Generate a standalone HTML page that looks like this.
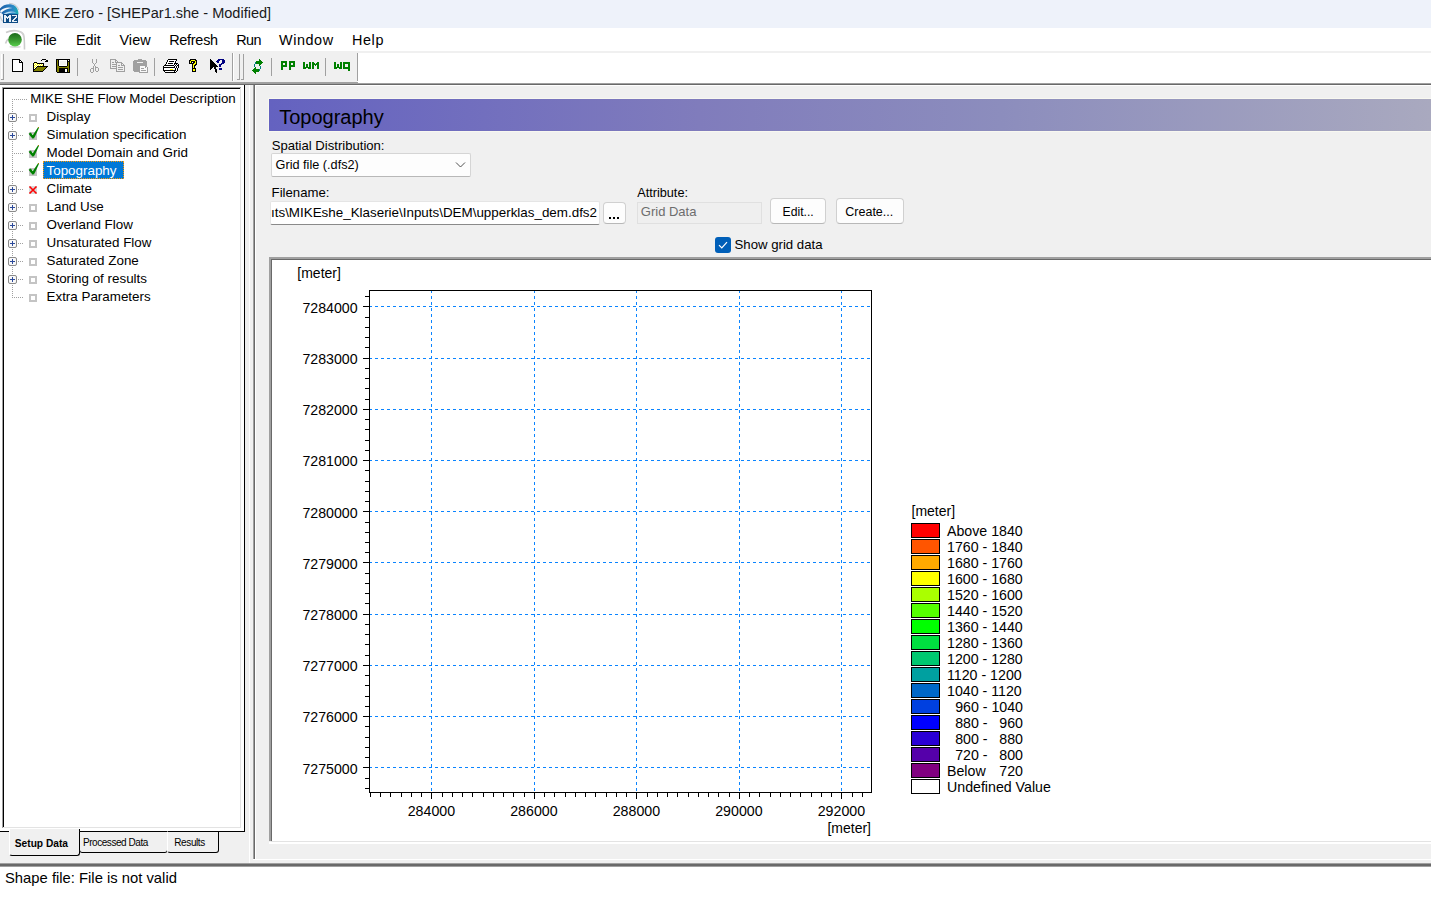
<!DOCTYPE html>
<html><head><meta charset="utf-8"><title>MIKE Zero</title>
<style>
html,body{margin:0;padding:0;}
body{width:1431px;height:910px;position:relative;overflow:hidden;background:#f0f0f0;font-family:"Liberation Sans", sans-serif;}
.b{position:absolute;}
.t{position:absolute;white-space:pre;font-family:"Liberation Sans", sans-serif;}
svg text{font-family:"Liberation Sans", sans-serif;}
</style></head><body>
<div class="b" style="left:0px;top:0px;width:1431px;height:28px;background:#eef2fa;"></div>
<div class="b" style="left:0px;top:28px;width:1431px;height:23px;background:#ffffff;"></div>
<div class="b" style="left:0px;top:51px;width:1431px;height:32px;background:#ffffff;"></div>
<div class="b" style="left:0px;top:51px;width:1431px;height:2px;background:#f0f0f0;"></div>
<div class="b" style="left:0px;top:51px;width:357px;height:31px;background:#f0f0f0;"></div>
<div class="b" style="left:357px;top:53px;width:1px;height:28px;background:#a0a0a0;"></div>
<div class="b" style="left:0px;top:82px;width:358px;height:1px;background:#a0a0a0;"></div>
<div class="b" style="left:0px;top:83px;width:1431px;height:1px;background:#a0a0a0;"></div>
<div class="b" style="left:0px;top:84px;width:1431px;height:1px;background:#696969;"></div>
<div class="b" style="left:0px;top:85px;width:1431px;height:778px;background:#f0f0f0;"></div>
<div class="b" style="left:0px;top:863px;width:1431px;height:1px;background:#a0a0a0;"></div>
<div class="b" style="left:0px;top:864px;width:1431px;height:2px;background:#696969;"></div>
<div class="b" style="left:0px;top:866px;width:1431px;height:1px;background:#a0a0a0;"></div>
<div class="b" style="left:0px;top:867px;width:1431px;height:43px;background:#ffffff;"></div>
<svg class="b" style="left:0;top:2px" width="24" height="24" viewBox="0 0 24 24"><defs><linearGradient id="tg" x1="0" y1="0" x2="1" y2="0"><stop offset="0" stop-color="#1a5ea6"/><stop offset="0.7" stop-color="#2a88c8"/><stop offset="1" stop-color="#18b0b0"/></linearGradient><linearGradient id="tg2" x1="0" y1="0" x2="1" y2="0"><stop offset="0" stop-color="#1a64a8"/><stop offset="0.5" stop-color="#7ab8e0"/><stop offset="1" stop-color="#30b0c0"/></linearGradient></defs><path d="M0 6.5 C3 2.5 10 1 14.5 3.5 C17 5 18.5 8 18.5 12.5 L3 12.5 C2 11.5 1 10.5 0 10.5 Z" fill="url(#tg)"/><path d="M0 9 C3 6 8 4.5 12.5 6 C8 6.3 4 8 1 11 Z" fill="#f4f8fc"/><path d="M3.5 12 C6.5 9.5 11 8.8 16.5 10.5 C12 10.3 8.5 10.8 6 12.5 Z" fill="#b8daf0"/><path d="M9 1.3 C13 1.3 17 3.5 18.8 8" fill="none" stroke="#c8ccd0" stroke-width="1.1"/><path d="M0 14 C0.5 16 1.5 18 3 19.5" fill="none" stroke="#c8ccd0" stroke-width="1.2"/><rect x="3" y="12" width="15" height="9" fill="#0e4c86"/><rect x="4" y="13" width="1" height="1" fill="#e6eef6"/><rect x="5" y="13" width="1" height="1" fill="#e6eef6"/><rect x="9" y="13" width="1" height="1" fill="#e6eef6"/><rect x="10" y="13" width="1" height="1" fill="#e6eef6"/><rect x="4" y="14" width="1" height="1" fill="#e6eef6"/><rect x="5" y="14" width="1" height="1" fill="#e6eef6"/><rect x="6" y="14" width="1" height="1" fill="#e6eef6"/><rect x="8" y="14" width="1" height="1" fill="#e6eef6"/><rect x="9" y="14" width="1" height="1" fill="#e6eef6"/><rect x="10" y="14" width="1" height="1" fill="#e6eef6"/><rect x="4" y="15" width="1" height="1" fill="#e6eef6"/><rect x="5" y="15" width="1" height="1" fill="#e6eef6"/><rect x="6" y="15" width="1" height="1" fill="#e6eef6"/><rect x="7" y="15" width="1" height="1" fill="#e6eef6"/><rect x="8" y="15" width="1" height="1" fill="#e6eef6"/><rect x="9" y="15" width="1" height="1" fill="#e6eef6"/><rect x="10" y="15" width="1" height="1" fill="#e6eef6"/><rect x="4" y="16" width="1" height="1" fill="#e6eef6"/><rect x="5" y="16" width="1" height="1" fill="#e6eef6"/><rect x="7" y="16" width="1" height="1" fill="#e6eef6"/><rect x="9" y="16" width="1" height="1" fill="#e6eef6"/><rect x="10" y="16" width="1" height="1" fill="#e6eef6"/><rect x="4" y="17" width="1" height="1" fill="#e6eef6"/><rect x="5" y="17" width="1" height="1" fill="#e6eef6"/><rect x="9" y="17" width="1" height="1" fill="#e6eef6"/><rect x="10" y="17" width="1" height="1" fill="#e6eef6"/><rect x="4" y="18" width="1" height="1" fill="#e6eef6"/><rect x="5" y="18" width="1" height="1" fill="#e6eef6"/><rect x="9" y="18" width="1" height="1" fill="#e6eef6"/><rect x="10" y="18" width="1" height="1" fill="#e6eef6"/><rect x="4" y="19" width="1" height="1" fill="#e6eef6"/><rect x="5" y="19" width="1" height="1" fill="#e6eef6"/><rect x="9" y="19" width="1" height="1" fill="#e6eef6"/><rect x="10" y="19" width="1" height="1" fill="#e6eef6"/><rect x="12" y="13" width="1" height="1" fill="#e6eef6"/><rect x="13" y="13" width="1" height="1" fill="#e6eef6"/><rect x="14" y="13" width="1" height="1" fill="#e6eef6"/><rect x="15" y="13" width="1" height="1" fill="#e6eef6"/><rect x="16" y="13" width="1" height="1" fill="#e6eef6"/><rect x="16" y="14" width="1" height="1" fill="#e6eef6"/><rect x="15" y="15" width="1" height="1" fill="#e6eef6"/><rect x="16" y="15" width="1" height="1" fill="#e6eef6"/><rect x="14" y="16" width="1" height="1" fill="#e6eef6"/><rect x="15" y="16" width="1" height="1" fill="#e6eef6"/><rect x="13" y="17" width="1" height="1" fill="#e6eef6"/><rect x="14" y="17" width="1" height="1" fill="#e6eef6"/><rect x="12" y="18" width="1" height="1" fill="#e6eef6"/><rect x="13" y="18" width="1" height="1" fill="#e6eef6"/><rect x="12" y="19" width="1" height="1" fill="#e6eef6"/><rect x="13" y="19" width="1" height="1" fill="#e6eef6"/><rect x="14" y="19" width="1" height="1" fill="#e6eef6"/><rect x="15" y="19" width="1" height="1" fill="#e6eef6"/><rect x="16" y="19" width="1" height="1" fill="#e6eef6"/></svg>
<div class="t " style="left:24.6px;top:6.28px;font-size:14.55px;line-height:14.55px;color:#1a1a1a">MIKE Zero - [SHEPar1.she - Modified]</div>
<svg class="b" style="left:2px;top:28px" width="24" height="24" viewBox="0 0 24 24">
<defs><linearGradient id="gb" x1="0" y1="0" x2="0" y2="1"><stop offset="0" stop-color="#1a6a1a"/><stop offset="0.55" stop-color="#3a9a30"/><stop offset="1" stop-color="#5ad04e"/></linearGradient></defs>
<path d="M4 4.5 C10 1.5 19 2 21.5 6.5 C22.5 9 22.5 12 22.5 21.5" fill="none" stroke="#cccccc" stroke-width="1.6"/>
<path d="M17 3.5 C20 4.5 21.5 6 21.5 9" fill="none" stroke="#d4d4d4" stroke-width="1.2"/>
<path d="M3.5 15.5 C4 13.5 5 12 6.5 11" fill="none" stroke="#cccccc" stroke-width="1.6"/>
<ellipse cx="13.2" cy="18.8" rx="6" ry="1.2" fill="#dcdcdc"/>
<circle cx="13" cy="11.8" r="6.8" fill="url(#gb)"/>
</svg>
<div class="t " style="left:34.5px;top:33.41px;font-size:14.4px;line-height:14.4px;color:#000;letter-spacing:-0.3px">File</div>
<div class="t " style="left:76px;top:33.41px;font-size:14.4px;line-height:14.4px;color:#000;letter-spacing:0px">Edit</div>
<div class="t " style="left:119.4px;top:33.41px;font-size:14.4px;line-height:14.4px;color:#000;letter-spacing:0.1px">View</div>
<div class="t " style="left:169.2px;top:33.41px;font-size:14.4px;line-height:14.4px;color:#000;letter-spacing:-0.25px">Refresh</div>
<div class="t " style="left:236.3px;top:33.41px;font-size:14.4px;line-height:14.4px;color:#000;letter-spacing:-0.6px">Run</div>
<div class="t " style="left:279.1px;top:33.41px;font-size:14.4px;line-height:14.4px;color:#000;letter-spacing:0.55px">Window</div>
<div class="t " style="left:352px;top:33.41px;font-size:14.4px;line-height:14.4px;color:#000;letter-spacing:0.6px">Help</div>
<div class="b" style="left:1px;top:54px;width:1px;height:26px;background:#ffffff;"></div>
<div class="b" style="left:3px;top:54px;width:1px;height:26px;background:#a0a0a0;"></div>
<div class="b" style="left:1px;top:79px;width:3px;height:1px;background:#a0a0a0;"></div>
<div class="b" style="left:77px;top:58px;width:1px;height:18px;background:#a0a0a0;"></div>
<div class="b" style="left:154px;top:58px;width:1px;height:18px;background:#a0a0a0;"></div>
<div class="b" style="left:232px;top:53px;width:1px;height:28px;background:#a0a0a0;"></div>
<div class="b" style="left:233px;top:53px;width:1px;height:28px;background:#ffffff;"></div>
<div class="b" style="left:239px;top:54px;width:1px;height:26px;background:#a0a0a0;"></div>
<div class="b" style="left:237px;top:79px;width:3px;height:1px;background:#a0a0a0;"></div>
<div class="b" style="left:243px;top:54px;width:1px;height:26px;background:#a0a0a0;"></div>
<div class="b" style="left:241px;top:79px;width:3px;height:1px;background:#a0a0a0;"></div>
<div class="b" style="left:271px;top:58px;width:1px;height:18px;background:#a0a0a0;"></div>
<div class="b" style="left:325px;top:58px;width:1px;height:18px;background:#a0a0a0;"></div>

<svg class="b" style="left:0;top:52px" width="360" height="30" viewBox="0 52 360 30" shape-rendering="crispEdges">
<rect x="12" y="59" width="8" height="1" fill="#000000"/><rect x="12" y="60" width="1" height="1" fill="#000000"/><rect x="13" y="60" width="6" height="1" fill="#ffffff"/><rect x="19" y="60" width="2" height="1" fill="#000000"/><rect x="12" y="61" width="1" height="1" fill="#000000"/><rect x="13" y="61" width="6" height="1" fill="#ffffff"/><rect x="19" y="61" width="1" height="1" fill="#000000"/><rect x="20" y="61" width="1" height="1" fill="#ffffff"/><rect x="21" y="61" width="1" height="1" fill="#000000"/><rect x="12" y="62" width="1" height="1" fill="#000000"/><rect x="13" y="62" width="6" height="1" fill="#ffffff"/><rect x="19" y="62" width="4" height="1" fill="#000000"/><rect x="12" y="63" width="1" height="1" fill="#000000"/><rect x="13" y="63" width="9" height="1" fill="#ffffff"/><rect x="22" y="63" width="1" height="1" fill="#000000"/><rect x="12" y="64" width="1" height="1" fill="#000000"/><rect x="13" y="64" width="9" height="1" fill="#ffffff"/><rect x="22" y="64" width="1" height="1" fill="#000000"/><rect x="12" y="65" width="1" height="1" fill="#000000"/><rect x="13" y="65" width="9" height="1" fill="#ffffff"/><rect x="22" y="65" width="1" height="1" fill="#000000"/><rect x="12" y="66" width="1" height="1" fill="#000000"/><rect x="13" y="66" width="9" height="1" fill="#ffffff"/><rect x="22" y="66" width="1" height="1" fill="#000000"/><rect x="12" y="67" width="1" height="1" fill="#000000"/><rect x="13" y="67" width="9" height="1" fill="#ffffff"/><rect x="22" y="67" width="1" height="1" fill="#000000"/><rect x="12" y="68" width="1" height="1" fill="#000000"/><rect x="13" y="68" width="9" height="1" fill="#ffffff"/><rect x="22" y="68" width="1" height="1" fill="#000000"/><rect x="12" y="69" width="1" height="1" fill="#000000"/><rect x="13" y="69" width="9" height="1" fill="#ffffff"/><rect x="22" y="69" width="1" height="1" fill="#000000"/><rect x="12" y="70" width="1" height="1" fill="#000000"/><rect x="13" y="70" width="9" height="1" fill="#ffffff"/><rect x="22" y="70" width="1" height="1" fill="#000000"/><rect x="12" y="71" width="11" height="1" fill="#000000"/><rect x="42" y="59" width="4" height="1" fill="#000000"/><rect x="41" y="60" width="1" height="1" fill="#000000"/><rect x="46" y="60" width="2" height="1" fill="#000000"/><rect x="45" y="61" width="3" height="1" fill="#000000"/><rect x="34" y="62" width="3" height="1" fill="#000000"/><rect x="33" y="63" width="1" height="1" fill="#000000"/><rect x="34" y="63" width="1" height="1" fill="#ffff00"/><rect x="35" y="63" width="1" height="1" fill="#ffffff"/><rect x="36" y="63" width="1" height="1" fill="#ffff00"/><rect x="37" y="63" width="7" height="1" fill="#000000"/><rect x="33" y="64" width="1" height="1" fill="#000000"/><rect x="34" y="64" width="1" height="1" fill="#ffffff"/><rect x="35" y="64" width="1" height="1" fill="#ffff00"/><rect x="36" y="64" width="1" height="1" fill="#ffffff"/><rect x="37" y="64" width="1" height="1" fill="#ffff00"/><rect x="38" y="64" width="1" height="1" fill="#ffffff"/><rect x="39" y="64" width="1" height="1" fill="#ffff00"/><rect x="40" y="64" width="1" height="1" fill="#ffffff"/><rect x="41" y="64" width="1" height="1" fill="#ffff00"/><rect x="42" y="64" width="1" height="1" fill="#ffffff"/><rect x="43" y="64" width="1" height="1" fill="#000000"/><rect x="33" y="65" width="1" height="1" fill="#000000"/><rect x="34" y="65" width="1" height="1" fill="#ffff00"/><rect x="35" y="65" width="1" height="1" fill="#ffffff"/><rect x="36" y="65" width="1" height="1" fill="#ffff00"/><rect x="37" y="65" width="1" height="1" fill="#ffffff"/><rect x="38" y="65" width="1" height="1" fill="#ffff00"/><rect x="39" y="65" width="1" height="1" fill="#ffffff"/><rect x="40" y="65" width="1" height="1" fill="#ffff00"/><rect x="41" y="65" width="1" height="1" fill="#ffffff"/><rect x="42" y="65" width="1" height="1" fill="#ffff00"/><rect x="43" y="65" width="1" height="1" fill="#000000"/><rect x="33" y="66" width="1" height="1" fill="#000000"/><rect x="34" y="66" width="1" height="1" fill="#ffffff"/><rect x="35" y="66" width="1" height="1" fill="#ffff00"/><rect x="36" y="66" width="1" height="1" fill="#ffffff"/><rect x="37" y="66" width="11" height="1" fill="#000000"/><rect x="33" y="67" width="1" height="1" fill="#000000"/><rect x="34" y="67" width="1" height="1" fill="#ffff00"/><rect x="35" y="67" width="1" height="1" fill="#ffffff"/><rect x="36" y="67" width="1" height="1" fill="#000000"/><rect x="37" y="67" width="9" height="1" fill="#808000"/><rect x="46" y="67" width="1" height="1" fill="#000000"/><rect x="33" y="68" width="1" height="1" fill="#000000"/><rect x="34" y="68" width="1" height="1" fill="#ffffff"/><rect x="35" y="68" width="1" height="1" fill="#000000"/><rect x="36" y="68" width="9" height="1" fill="#808000"/><rect x="45" y="68" width="1" height="1" fill="#000000"/><rect x="33" y="69" width="2" height="1" fill="#000000"/><rect x="35" y="69" width="9" height="1" fill="#808000"/><rect x="44" y="69" width="1" height="1" fill="#000000"/><rect x="33" y="70" width="1" height="1" fill="#000000"/><rect x="34" y="70" width="9" height="1" fill="#808000"/><rect x="43" y="70" width="1" height="1" fill="#000000"/><rect x="33" y="71" width="10" height="1" fill="#000000"/><rect x="56" y="59" width="14" height="1" fill="#000000"/><rect x="56" y="60" width="1" height="1" fill="#000000"/><rect x="57" y="60" width="1" height="1" fill="#808000"/><rect x="58" y="60" width="1" height="1" fill="#000000"/><rect x="59" y="60" width="8" height="1" fill="#ffffff"/><rect x="67" y="60" width="1" height="1" fill="#000000"/><rect x="68" y="60" width="1" height="1" fill="#ffffff"/><rect x="69" y="60" width="1" height="1" fill="#000000"/><rect x="56" y="61" width="1" height="1" fill="#000000"/><rect x="57" y="61" width="1" height="1" fill="#808000"/><rect x="58" y="61" width="1" height="1" fill="#000000"/><rect x="59" y="61" width="1" height="1" fill="#ffffff"/><rect x="60" y="61" width="6" height="1" fill="#f0f0f0"/><rect x="66" y="61" width="1" height="1" fill="#ffffff"/><rect x="67" y="61" width="3" height="1" fill="#000000"/><rect x="56" y="62" width="1" height="1" fill="#000000"/><rect x="57" y="62" width="1" height="1" fill="#808000"/><rect x="58" y="62" width="1" height="1" fill="#000000"/><rect x="59" y="62" width="1" height="1" fill="#ffffff"/><rect x="60" y="62" width="6" height="1" fill="#f0f0f0"/><rect x="66" y="62" width="1" height="1" fill="#ffffff"/><rect x="67" y="62" width="1" height="1" fill="#000000"/><rect x="68" y="62" width="1" height="1" fill="#808000"/><rect x="69" y="62" width="1" height="1" fill="#000000"/><rect x="56" y="63" width="1" height="1" fill="#000000"/><rect x="57" y="63" width="1" height="1" fill="#808000"/><rect x="58" y="63" width="1" height="1" fill="#000000"/><rect x="59" y="63" width="1" height="1" fill="#ffffff"/><rect x="60" y="63" width="6" height="1" fill="#f0f0f0"/><rect x="66" y="63" width="1" height="1" fill="#ffffff"/><rect x="67" y="63" width="1" height="1" fill="#000000"/><rect x="68" y="63" width="1" height="1" fill="#808000"/><rect x="69" y="63" width="1" height="1" fill="#000000"/><rect x="56" y="64" width="1" height="1" fill="#000000"/><rect x="57" y="64" width="1" height="1" fill="#808000"/><rect x="58" y="64" width="1" height="1" fill="#000000"/><rect x="59" y="64" width="1" height="1" fill="#ffffff"/><rect x="60" y="64" width="6" height="1" fill="#f0f0f0"/><rect x="66" y="64" width="1" height="1" fill="#ffffff"/><rect x="67" y="64" width="1" height="1" fill="#000000"/><rect x="68" y="64" width="1" height="1" fill="#808000"/><rect x="69" y="64" width="1" height="1" fill="#000000"/><rect x="56" y="65" width="1" height="1" fill="#000000"/><rect x="57" y="65" width="1" height="1" fill="#808000"/><rect x="58" y="65" width="1" height="1" fill="#000000"/><rect x="59" y="65" width="8" height="1" fill="#ffffff"/><rect x="67" y="65" width="1" height="1" fill="#000000"/><rect x="68" y="65" width="1" height="1" fill="#808000"/><rect x="69" y="65" width="1" height="1" fill="#000000"/><rect x="56" y="66" width="1" height="1" fill="#000000"/><rect x="57" y="66" width="2" height="1" fill="#808000"/><rect x="59" y="66" width="8" height="1" fill="#000000"/><rect x="67" y="66" width="2" height="1" fill="#808000"/><rect x="69" y="66" width="1" height="1" fill="#000000"/><rect x="56" y="67" width="1" height="1" fill="#000000"/><rect x="57" y="67" width="12" height="1" fill="#808000"/><rect x="69" y="67" width="1" height="1" fill="#000000"/><rect x="56" y="68" width="1" height="1" fill="#000000"/><rect x="57" y="68" width="2" height="1" fill="#808000"/><rect x="59" y="68" width="9" height="1" fill="#000000"/><rect x="68" y="68" width="1" height="1" fill="#808000"/><rect x="69" y="68" width="1" height="1" fill="#000000"/><rect x="56" y="69" width="1" height="1" fill="#000000"/><rect x="57" y="69" width="2" height="1" fill="#808000"/><rect x="59" y="69" width="6" height="1" fill="#000000"/><rect x="65" y="69" width="2" height="1" fill="#ffffff"/><rect x="67" y="69" width="1" height="1" fill="#000000"/><rect x="68" y="69" width="1" height="1" fill="#808000"/><rect x="69" y="69" width="1" height="1" fill="#000000"/><rect x="56" y="70" width="1" height="1" fill="#000000"/><rect x="57" y="70" width="2" height="1" fill="#808000"/><rect x="59" y="70" width="6" height="1" fill="#000000"/><rect x="65" y="70" width="2" height="1" fill="#ffffff"/><rect x="67" y="70" width="1" height="1" fill="#000000"/><rect x="68" y="70" width="1" height="1" fill="#808000"/><rect x="69" y="70" width="1" height="1" fill="#000000"/><rect x="56" y="71" width="1" height="1" fill="#000000"/><rect x="57" y="71" width="2" height="1" fill="#808000"/><rect x="59" y="71" width="6" height="1" fill="#000000"/><rect x="65" y="71" width="2" height="1" fill="#ffffff"/><rect x="67" y="71" width="1" height="1" fill="#000000"/><rect x="68" y="71" width="1" height="1" fill="#808000"/><rect x="69" y="71" width="1" height="1" fill="#000000"/><rect x="57" y="72" width="13" height="1" fill="#000000"/><rect x="92" y="59" width="1" height="1" fill="#a0a0a0"/><rect x="96" y="59" width="1" height="1" fill="#a0a0a0"/><rect x="92" y="60" width="1" height="1" fill="#a0a0a0"/><rect x="96" y="60" width="1" height="1" fill="#a0a0a0"/><rect x="92" y="61" width="1" height="1" fill="#a0a0a0"/><rect x="96" y="61" width="1" height="1" fill="#a0a0a0"/><rect x="92" y="62" width="1" height="1" fill="#a0a0a0"/><rect x="96" y="62" width="1" height="1" fill="#a0a0a0"/><rect x="93" y="63" width="1" height="1" fill="#a0a0a0"/><rect x="95" y="63" width="1" height="1" fill="#a0a0a0"/><rect x="94" y="64" width="1" height="1" fill="#a0a0a0"/><rect x="94" y="65" width="1" height="1" fill="#a0a0a0"/><rect x="93" y="66" width="1" height="1" fill="#a0a0a0"/><rect x="95" y="66" width="1" height="1" fill="#a0a0a0"/><rect x="93" y="67" width="1" height="1" fill="#a0a0a0"/><rect x="95" y="67" width="3" height="1" fill="#a0a0a0"/><rect x="91" y="68" width="3" height="1" fill="#a0a0a0"/><rect x="95" y="68" width="1" height="1" fill="#a0a0a0"/><rect x="98" y="68" width="1" height="1" fill="#a0a0a0"/><rect x="90" y="69" width="1" height="1" fill="#a0a0a0"/><rect x="93" y="69" width="1" height="1" fill="#a0a0a0"/><rect x="95" y="69" width="1" height="1" fill="#a0a0a0"/><rect x="98" y="69" width="1" height="1" fill="#a0a0a0"/><rect x="90" y="70" width="1" height="1" fill="#a0a0a0"/><rect x="93" y="70" width="1" height="1" fill="#a0a0a0"/><rect x="95" y="70" width="1" height="1" fill="#a0a0a0"/><rect x="98" y="70" width="1" height="1" fill="#a0a0a0"/><rect x="90" y="71" width="1" height="1" fill="#a0a0a0"/><rect x="93" y="71" width="1" height="1" fill="#a0a0a0"/><rect x="96" y="71" width="2" height="1" fill="#a0a0a0"/><rect x="91" y="72" width="2" height="1" fill="#a0a0a0"/><rect x="110" y="59" width="6" height="1" fill="#a0a0a0"/><rect x="110" y="60" width="1" height="1" fill="#a0a0a0"/><rect x="115" y="60" width="2" height="1" fill="#a0a0a0"/><rect x="110" y="61" width="1" height="1" fill="#a0a0a0"/><rect x="115" y="61" width="1" height="1" fill="#a0a0a0"/><rect x="117" y="61" width="1" height="1" fill="#a0a0a0"/><rect x="110" y="62" width="1" height="1" fill="#a0a0a0"/><rect x="112" y="62" width="2" height="1" fill="#a0a0a0"/><rect x="115" y="62" width="7" height="1" fill="#a0a0a0"/><rect x="110" y="63" width="1" height="1" fill="#a0a0a0"/><rect x="116" y="63" width="1" height="1" fill="#a0a0a0"/><rect x="121" y="63" width="2" height="1" fill="#a0a0a0"/><rect x="110" y="64" width="1" height="1" fill="#a0a0a0"/><rect x="112" y="64" width="5" height="1" fill="#a0a0a0"/><rect x="121" y="64" width="1" height="1" fill="#a0a0a0"/><rect x="123" y="64" width="1" height="1" fill="#a0a0a0"/><rect x="110" y="65" width="1" height="1" fill="#a0a0a0"/><rect x="116" y="65" width="1" height="1" fill="#a0a0a0"/><rect x="118" y="65" width="2" height="1" fill="#a0a0a0"/><rect x="121" y="65" width="4" height="1" fill="#a0a0a0"/><rect x="110" y="66" width="1" height="1" fill="#a0a0a0"/><rect x="112" y="66" width="5" height="1" fill="#a0a0a0"/><rect x="124" y="66" width="1" height="1" fill="#a0a0a0"/><rect x="110" y="67" width="1" height="1" fill="#a0a0a0"/><rect x="116" y="67" width="1" height="1" fill="#a0a0a0"/><rect x="118" y="67" width="5" height="1" fill="#a0a0a0"/><rect x="124" y="67" width="1" height="1" fill="#a0a0a0"/><rect x="110" y="68" width="7" height="1" fill="#a0a0a0"/><rect x="124" y="68" width="1" height="1" fill="#a0a0a0"/><rect x="116" y="69" width="1" height="1" fill="#a0a0a0"/><rect x="118" y="69" width="5" height="1" fill="#a0a0a0"/><rect x="124" y="69" width="1" height="1" fill="#a0a0a0"/><rect x="116" y="70" width="1" height="1" fill="#a0a0a0"/><rect x="124" y="70" width="1" height="1" fill="#a0a0a0"/><rect x="116" y="71" width="9" height="1" fill="#a0a0a0"/><rect x="138" y="59" width="4" height="1" fill="#a0a0a0"/><rect x="134" y="60" width="12" height="1" fill="#a0a0a0"/><rect x="133" y="61" width="14" height="1" fill="#a0a0a0"/><rect x="133" y="62" width="4" height="1" fill="#a0a0a0"/><rect x="137" y="62" width="6" height="1" fill="#f0f0f0"/><rect x="143" y="62" width="4" height="1" fill="#a0a0a0"/><rect x="133" y="63" width="14" height="1" fill="#a0a0a0"/><rect x="133" y="64" width="14" height="1" fill="#a0a0a0"/><rect x="133" y="65" width="14" height="1" fill="#a0a0a0"/><rect x="133" y="66" width="7" height="1" fill="#a0a0a0"/><rect x="140" y="66" width="5" height="1" fill="#f8f8f8"/><rect x="145" y="66" width="2" height="1" fill="#a0a0a0"/><rect x="133" y="67" width="7" height="1" fill="#a0a0a0"/><rect x="140" y="67" width="5" height="1" fill="#f8f8f8"/><rect x="145" y="67" width="1" height="1" fill="#a0a0a0"/><rect x="146" y="67" width="1" height="1" fill="#f8f8f8"/><rect x="147" y="67" width="1" height="1" fill="#a0a0a0"/><rect x="133" y="68" width="7" height="1" fill="#a0a0a0"/><rect x="140" y="68" width="1" height="1" fill="#f8f8f8"/><rect x="141" y="68" width="3" height="1" fill="#a0a0a0"/><rect x="144" y="68" width="3" height="1" fill="#f8f8f8"/><rect x="147" y="68" width="1" height="1" fill="#a0a0a0"/><rect x="133" y="69" width="7" height="1" fill="#a0a0a0"/><rect x="140" y="69" width="7" height="1" fill="#f8f8f8"/><rect x="147" y="69" width="1" height="1" fill="#a0a0a0"/><rect x="133" y="70" width="7" height="1" fill="#a0a0a0"/><rect x="140" y="70" width="1" height="1" fill="#f8f8f8"/><rect x="141" y="70" width="5" height="1" fill="#a0a0a0"/><rect x="146" y="70" width="1" height="1" fill="#f8f8f8"/><rect x="147" y="70" width="1" height="1" fill="#a0a0a0"/><rect x="134" y="71" width="6" height="1" fill="#a0a0a0"/><rect x="140" y="71" width="7" height="1" fill="#f8f8f8"/><rect x="147" y="71" width="1" height="1" fill="#a0a0a0"/><rect x="139" y="72" width="9" height="1" fill="#a0a0a0"/><rect x="168" y="59" width="9" height="1" fill="#000000"/><rect x="167" y="60" width="1" height="1" fill="#000000"/><rect x="168" y="60" width="8" height="1" fill="#ffffff"/><rect x="176" y="60" width="1" height="1" fill="#000000"/><rect x="167" y="61" width="1" height="1" fill="#000000"/><rect x="168" y="61" width="1" height="1" fill="#ffffff"/><rect x="169" y="61" width="5" height="1" fill="#000000"/><rect x="174" y="61" width="1" height="1" fill="#ffffff"/><rect x="175" y="61" width="1" height="1" fill="#000000"/><rect x="166" y="62" width="1" height="1" fill="#000000"/><rect x="167" y="62" width="8" height="1" fill="#ffffff"/><rect x="175" y="62" width="1" height="1" fill="#000000"/><rect x="166" y="63" width="1" height="1" fill="#000000"/><rect x="167" y="63" width="1" height="1" fill="#ffffff"/><rect x="168" y="63" width="5" height="1" fill="#000000"/><rect x="173" y="63" width="1" height="1" fill="#ffffff"/><rect x="174" y="63" width="4" height="1" fill="#000000"/><rect x="165" y="64" width="1" height="1" fill="#000000"/><rect x="166" y="64" width="8" height="1" fill="#ffffff"/><rect x="174" y="64" width="1" height="1" fill="#000000"/><rect x="175" y="64" width="1" height="1" fill="#ffffff"/><rect x="176" y="64" width="1" height="1" fill="#000000"/><rect x="177" y="64" width="1" height="1" fill="#ffffff"/><rect x="178" y="64" width="1" height="1" fill="#000000"/><rect x="164" y="65" width="10" height="1" fill="#000000"/><rect x="174" y="65" width="1" height="1" fill="#ffffff"/><rect x="175" y="65" width="1" height="1" fill="#000000"/><rect x="176" y="65" width="1" height="1" fill="#ffffff"/><rect x="177" y="65" width="2" height="1" fill="#000000"/><rect x="163" y="66" width="1" height="1" fill="#000000"/><rect x="164" y="66" width="10" height="1" fill="#ffffff"/><rect x="174" y="66" width="1" height="1" fill="#000000"/><rect x="175" y="66" width="1" height="1" fill="#ffffff"/><rect x="176" y="66" width="1" height="1" fill="#000000"/><rect x="177" y="66" width="1" height="1" fill="#ffffff"/><rect x="178" y="66" width="1" height="1" fill="#000000"/><rect x="163" y="67" width="12" height="1" fill="#000000"/><rect x="175" y="67" width="1" height="1" fill="#ffffff"/><rect x="176" y="67" width="1" height="1" fill="#000000"/><rect x="177" y="67" width="1" height="1" fill="#ffffff"/><rect x="178" y="67" width="1" height="1" fill="#000000"/><rect x="163" y="68" width="1" height="1" fill="#000000"/><rect x="164" y="68" width="11" height="1" fill="#ffffff"/><rect x="175" y="68" width="1" height="1" fill="#000000"/><rect x="176" y="68" width="1" height="1" fill="#ffffff"/><rect x="177" y="68" width="1" height="1" fill="#000000"/><rect x="163" y="69" width="1" height="1" fill="#000000"/><rect x="164" y="69" width="6" height="1" fill="#ffffff"/><rect x="170" y="69" width="3" height="1" fill="#ffff00"/><rect x="173" y="69" width="2" height="1" fill="#ffffff"/><rect x="175" y="69" width="1" height="1" fill="#000000"/><rect x="176" y="69" width="1" height="1" fill="#ffffff"/><rect x="177" y="69" width="1" height="1" fill="#000000"/><rect x="163" y="70" width="13" height="1" fill="#000000"/><rect x="176" y="70" width="1" height="1" fill="#ffffff"/><rect x="177" y="70" width="1" height="1" fill="#000000"/><rect x="164" y="71" width="1" height="1" fill="#000000"/><rect x="165" y="71" width="9" height="1" fill="#ffffff"/><rect x="174" y="71" width="1" height="1" fill="#000000"/><rect x="175" y="71" width="1" height="1" fill="#ffffff"/><rect x="176" y="71" width="1" height="1" fill="#000000"/><rect x="165" y="72" width="11" height="1" fill="#000000"/><rect x="190" y="59" width="6" height="1" fill="#000000"/><rect x="189" y="60" width="2" height="1" fill="#000000"/><rect x="191" y="60" width="4" height="1" fill="#ffff00"/><rect x="195" y="60" width="2" height="1" fill="#000000"/><rect x="189" y="61" width="1" height="1" fill="#000000"/><rect x="190" y="61" width="1" height="1" fill="#ffff00"/><rect x="191" y="61" width="4" height="1" fill="#000000"/><rect x="195" y="61" width="1" height="1" fill="#ffff00"/><rect x="196" y="61" width="1" height="1" fill="#000000"/><rect x="189" y="62" width="1" height="1" fill="#000000"/><rect x="190" y="62" width="1" height="1" fill="#ffff00"/><rect x="191" y="62" width="1" height="1" fill="#000000"/><rect x="193" y="62" width="2" height="1" fill="#000000"/><rect x="195" y="62" width="1" height="1" fill="#ffff00"/><rect x="196" y="62" width="1" height="1" fill="#000000"/><rect x="189" y="63" width="5" height="1" fill="#000000"/><rect x="194" y="63" width="2" height="1" fill="#ffff00"/><rect x="196" y="63" width="1" height="1" fill="#000000"/><rect x="192" y="64" width="1" height="1" fill="#000000"/><rect x="193" y="64" width="2" height="1" fill="#ffff00"/><rect x="195" y="64" width="2" height="1" fill="#000000"/><rect x="192" y="65" width="1" height="1" fill="#000000"/><rect x="193" y="65" width="1" height="1" fill="#ffff00"/><rect x="194" y="65" width="2" height="1" fill="#000000"/><rect x="192" y="66" width="1" height="1" fill="#000000"/><rect x="193" y="66" width="1" height="1" fill="#ffff00"/><rect x="194" y="66" width="1" height="1" fill="#000000"/><rect x="192" y="67" width="1" height="1" fill="#000000"/><rect x="193" y="67" width="1" height="1" fill="#ffff00"/><rect x="194" y="67" width="1" height="1" fill="#000000"/><rect x="192" y="68" width="4" height="1" fill="#000000"/><rect x="192" y="69" width="1" height="1" fill="#000000"/><rect x="193" y="69" width="2" height="1" fill="#ffff00"/><rect x="195" y="69" width="1" height="1" fill="#000000"/><rect x="192" y="70" width="1" height="1" fill="#000000"/><rect x="193" y="70" width="2" height="1" fill="#ffff00"/><rect x="195" y="70" width="1" height="1" fill="#000000"/><rect x="192" y="71" width="4" height="1" fill="#000000"/><rect x="210" y="59" width="1" height="1" fill="#000000"/><rect x="210" y="60" width="2" height="1" fill="#000000"/><rect x="210" y="61" width="3" height="1" fill="#000000"/><rect x="210" y="62" width="4" height="1" fill="#000000"/><rect x="210" y="63" width="5" height="1" fill="#000000"/><rect x="210" y="64" width="6" height="1" fill="#000000"/><rect x="210" y="65" width="7" height="1" fill="#000000"/><rect x="210" y="66" width="8" height="1" fill="#000000"/><rect x="210" y="67" width="3" height="1" fill="#000000"/><rect x="214" y="67" width="2" height="1" fill="#000000"/><rect x="210" y="68" width="2" height="1" fill="#000000"/><rect x="214" y="68" width="2" height="1" fill="#000000"/><rect x="210" y="69" width="1" height="1" fill="#000000"/><rect x="215" y="69" width="2" height="1" fill="#000000"/><rect x="215" y="70" width="2" height="1" fill="#000000"/><rect x="215" y="71" width="2" height="1" fill="#000000"/><rect x="216" y="72" width="1" height="1" fill="#000000"/><rect x="218" y="59" width="6" height="1" fill="#000080"/><rect x="217" y="60" width="3" height="1" fill="#000080"/><rect x="222" y="60" width="3" height="1" fill="#000080"/><rect x="216" y="61" width="3" height="1" fill="#000080"/><rect x="222" y="61" width="3" height="1" fill="#000080"/><rect x="217" y="62" width="2" height="1" fill="#000080"/><rect x="222" y="62" width="3" height="1" fill="#000080"/><rect x="221" y="63" width="3" height="1" fill="#000080"/><rect x="219" y="64" width="3" height="1" fill="#000080"/><rect x="219" y="65" width="2" height="1" fill="#000080"/><rect x="219" y="66" width="2" height="1" fill="#000080"/><rect x="219" y="68" width="3" height="1" fill="#000080"/><rect x="219" y="69" width="3" height="1" fill="#000080"/>
<!-- refresh -->
<rect x="259" y="59" width="1" height="1" fill="#008000"/><rect x="259" y="60" width="2" height="1" fill="#008000"/><rect x="256" y="61" width="6" height="1" fill="#008000"/><rect x="256" y="62" width="7" height="1" fill="#008000"/><rect x="256" y="63" width="6" height="1" fill="#008000"/><rect x="259" y="64" width="2" height="1" fill="#008000"/><rect x="259" y="65" width="1" height="1" fill="#008000"/><rect x="255" y="67" width="1" height="1" fill="#008000"/><rect x="254" y="68" width="2" height="1" fill="#008000"/><rect x="253" y="69" width="6" height="1" fill="#008000"/><rect x="252" y="70" width="7" height="1" fill="#008000"/><rect x="253" y="71" width="6" height="1" fill="#008000"/><rect x="254" y="72" width="2" height="1" fill="#008000"/><rect x="255" y="73" width="1" height="1" fill="#008000"/><rect x="255" y="62" width="1" height="1" fill="#008080"/><rect x="255" y="63" width="1" height="1" fill="#008080"/><rect x="254" y="64" width="1" height="1" fill="#008080"/><rect x="254" y="65" width="1" height="1" fill="#008080"/><rect x="254" y="66" width="1" height="1" fill="#008080"/><rect x="260" y="66" width="1" height="1" fill="#008080"/><rect x="260" y="67" width="1" height="1" fill="#008080"/><rect x="260" y="68" width="1" height="1" fill="#008080"/><rect x="259" y="69" width="1" height="1" fill="#008080"/><rect x="259" y="70" width="1" height="1" fill="#008080"/>
<!-- PP WM WQ -->
<rect x="281" y="61" width="6" height="1" fill="#008000"/><rect x="281" y="62" width="6" height="1" fill="#008000"/><rect x="281" y="63" width="2" height="1" fill="#008000"/><rect x="285" y="63" width="2" height="1" fill="#008000"/><rect x="281" y="64" width="2" height="1" fill="#008000"/><rect x="285" y="64" width="2" height="1" fill="#008000"/><rect x="281" y="65" width="6" height="1" fill="#008000"/><rect x="281" y="66" width="6" height="1" fill="#008000"/><rect x="281" y="67" width="2" height="1" fill="#008000"/><rect x="281" y="68" width="2" height="1" fill="#008000"/><rect x="281" y="69" width="2" height="1" fill="#008000"/><rect x="289" y="61" width="6" height="1" fill="#008000"/><rect x="289" y="62" width="6" height="1" fill="#008000"/><rect x="289" y="63" width="2" height="1" fill="#008000"/><rect x="293" y="63" width="2" height="1" fill="#008000"/><rect x="289" y="64" width="2" height="1" fill="#008000"/><rect x="293" y="64" width="2" height="1" fill="#008000"/><rect x="289" y="65" width="6" height="1" fill="#008000"/><rect x="289" y="66" width="6" height="1" fill="#008000"/><rect x="289" y="67" width="2" height="1" fill="#008000"/><rect x="289" y="68" width="2" height="1" fill="#008000"/><rect x="289" y="69" width="2" height="1" fill="#008000"/><rect x="303" y="62" width="2" height="1" fill="#008000"/><rect x="309" y="62" width="2" height="1" fill="#008000"/><rect x="303" y="63" width="2" height="1" fill="#008000"/><rect x="309" y="63" width="2" height="1" fill="#008000"/><rect x="303" y="64" width="2" height="1" fill="#008000"/><rect x="306" y="64" width="2" height="1" fill="#008000"/><rect x="309" y="64" width="2" height="1" fill="#008000"/><rect x="303" y="65" width="2" height="1" fill="#008000"/><rect x="306" y="65" width="2" height="1" fill="#008000"/><rect x="309" y="65" width="2" height="1" fill="#008000"/><rect x="303" y="66" width="2" height="1" fill="#008000"/><rect x="306" y="66" width="2" height="1" fill="#008000"/><rect x="309" y="66" width="2" height="1" fill="#008000"/><rect x="303" y="67" width="8" height="1" fill="#008000"/><rect x="303" y="68" width="3" height="1" fill="#008000"/><rect x="308" y="68" width="3" height="1" fill="#008000"/><rect x="312" y="62" width="2" height="1" fill="#008000"/><rect x="317" y="62" width="2" height="1" fill="#008000"/><rect x="312" y="63" width="3" height="1" fill="#008000"/><rect x="316" y="63" width="3" height="1" fill="#008000"/><rect x="312" y="64" width="7" height="1" fill="#008000"/><rect x="312" y="65" width="2" height="1" fill="#008000"/><rect x="315" y="65" width="1" height="1" fill="#008000"/><rect x="317" y="65" width="2" height="1" fill="#008000"/><rect x="312" y="66" width="2" height="1" fill="#008000"/><rect x="317" y="66" width="2" height="1" fill="#008000"/><rect x="312" y="67" width="2" height="1" fill="#008000"/><rect x="317" y="67" width="2" height="1" fill="#008000"/><rect x="312" y="68" width="2" height="1" fill="#008000"/><rect x="317" y="68" width="2" height="1" fill="#008000"/><rect x="334" y="62" width="2" height="1" fill="#008000"/><rect x="340" y="62" width="2" height="1" fill="#008000"/><rect x="334" y="63" width="2" height="1" fill="#008000"/><rect x="340" y="63" width="2" height="1" fill="#008000"/><rect x="334" y="64" width="2" height="1" fill="#008000"/><rect x="337" y="64" width="2" height="1" fill="#008000"/><rect x="340" y="64" width="2" height="1" fill="#008000"/><rect x="334" y="65" width="2" height="1" fill="#008000"/><rect x="337" y="65" width="2" height="1" fill="#008000"/><rect x="340" y="65" width="2" height="1" fill="#008000"/><rect x="334" y="66" width="2" height="1" fill="#008000"/><rect x="337" y="66" width="2" height="1" fill="#008000"/><rect x="340" y="66" width="2" height="1" fill="#008000"/><rect x="334" y="67" width="8" height="1" fill="#008000"/><rect x="334" y="68" width="3" height="1" fill="#008000"/><rect x="339" y="68" width="3" height="1" fill="#008000"/><rect x="343" y="62" width="7" height="1" fill="#008000"/><rect x="343" y="63" width="7" height="1" fill="#008000"/><rect x="343" y="64" width="2" height="1" fill="#008000"/><rect x="348" y="64" width="2" height="1" fill="#008000"/><rect x="343" y="65" width="2" height="1" fill="#008000"/><rect x="348" y="65" width="2" height="1" fill="#008000"/><rect x="343" y="66" width="2" height="1" fill="#008000"/><rect x="348" y="66" width="2" height="1" fill="#008000"/><rect x="343" y="67" width="7" height="1" fill="#008000"/><rect x="343" y="68" width="7" height="1" fill="#008000"/><rect x="348" y="69" width="2" height="1" fill="#008000"/><rect x="348" y="70" width="2" height="1" fill="#008000"/>
</svg>
<div class="b" style="left:0px;top:85px;width:244px;height:746px;background:#ffffff;"></div>
<div class="b" style="left:244px;top:85px;width:1px;height:747px;background:#000000;"></div>
<div class="b" style="left:0px;top:831px;width:9px;height:1px;background:#000000;"></div>
<div class="b" style="left:79px;top:831px;width:166px;height:1px;background:#000000;"></div>
<div class="b" style="left:2px;top:87px;width:239px;height:1px;background:#a0a0a0;"></div>
<div class="b" style="left:2px;top:87px;width:1px;height:741px;background:#a0a0a0;"></div>
<div class="b" style="left:3px;top:88px;width:237px;height:1px;background:#000000;"></div>
<div class="b" style="left:3px;top:88px;width:1px;height:739px;background:#000000;"></div>
<div class="b" style="left:240px;top:88px;width:1px;height:740px;background:#e3e3e3;"></div>
<div class="b" style="left:3px;top:827px;width:238px;height:1px;background:#e3e3e3;"></div>
<div class="b" style="left:0px;top:832px;width:244px;height:31px;background:#f0f0f0;"></div>
<div class="b" style="left:9px;top:829px;width:71px;height:27px;background:#f0f0f0;border-left:1px solid #fff;border-right:1px solid #000;border-bottom:1px solid #000;border-radius:0 0 3px 3px;box-sizing:border-box"></div>
<div class="b" style="left:79px;top:831px;width:89px;height:22px;background:#f0f0f0;border-left:1px solid #000;border-right:1px solid #000;border-bottom:1px solid #000;border-top:1px solid #000;border-radius:0 0 3px 3px;box-sizing:border-box"></div>
<div class="b" style="left:167px;top:831px;width:52px;height:22px;background:#f0f0f0;border-left:1px solid #fff;border-right:1px solid #000;border-bottom:1px solid #000;border-top:1px solid #000;border-radius:0 0 3px 3px;box-sizing:border-box"></div>
<div class="t " style="left:14.8px;top:838.57px;font-size:10.2px;line-height:10.2px;font-weight:bold;color:#000">Setup Data</div>
<div class="t " style="left:83px;top:837.53px;font-size:10px;line-height:10px;color:#000;letter-spacing:-0.45px">Processed Data</div>
<div class="t " style="left:174.3px;top:837.53px;font-size:10px;line-height:10px;color:#000;letter-spacing:-0.4px">Results</div>
<svg class="b" style="left:0;top:85px" width="244" height="230" viewBox="0 85 244 230" shape-rendering="crispEdges">
<rect x="12" y="99" width="1" height="1" fill="#a0a0a0"/>
<rect x="14" y="99" width="1" height="1" fill="#a0a0a0"/>
<rect x="16" y="99" width="1" height="1" fill="#a0a0a0"/>
<rect x="18" y="99" width="1" height="1" fill="#a0a0a0"/>
<rect x="20" y="99" width="1" height="1" fill="#a0a0a0"/>
<rect x="22" y="99" width="1" height="1" fill="#a0a0a0"/>
<rect x="24" y="99" width="1" height="1" fill="#a0a0a0"/>
<rect x="26" y="99" width="1" height="1" fill="#a0a0a0"/>
<rect x="12" y="101" width="1" height="1" fill="#a0a0a0"/>
<rect x="12" y="103" width="1" height="1" fill="#a0a0a0"/>
<rect x="12" y="105" width="1" height="1" fill="#a0a0a0"/>
<rect x="12" y="107" width="1" height="1" fill="#a0a0a0"/>
<rect x="12" y="109" width="1" height="1" fill="#a0a0a0"/>
<rect x="12" y="111" width="1" height="1" fill="#a0a0a0"/>
<rect x="12" y="113" width="1" height="1" fill="#a0a0a0"/>
<rect x="12" y="115" width="1" height="1" fill="#a0a0a0"/>
<rect x="12" y="117" width="1" height="1" fill="#a0a0a0"/>
<rect x="12" y="119" width="1" height="1" fill="#a0a0a0"/>
<rect x="12" y="121" width="1" height="1" fill="#a0a0a0"/>
<rect x="12" y="123" width="1" height="1" fill="#a0a0a0"/>
<rect x="12" y="125" width="1" height="1" fill="#a0a0a0"/>
<rect x="12" y="127" width="1" height="1" fill="#a0a0a0"/>
<rect x="12" y="129" width="1" height="1" fill="#a0a0a0"/>
<rect x="12" y="131" width="1" height="1" fill="#a0a0a0"/>
<rect x="12" y="133" width="1" height="1" fill="#a0a0a0"/>
<rect x="12" y="135" width="1" height="1" fill="#a0a0a0"/>
<rect x="12" y="137" width="1" height="1" fill="#a0a0a0"/>
<rect x="12" y="139" width="1" height="1" fill="#a0a0a0"/>
<rect x="12" y="141" width="1" height="1" fill="#a0a0a0"/>
<rect x="12" y="143" width="1" height="1" fill="#a0a0a0"/>
<rect x="12" y="145" width="1" height="1" fill="#a0a0a0"/>
<rect x="12" y="147" width="1" height="1" fill="#a0a0a0"/>
<rect x="12" y="149" width="1" height="1" fill="#a0a0a0"/>
<rect x="12" y="151" width="1" height="1" fill="#a0a0a0"/>
<rect x="12" y="153" width="1" height="1" fill="#a0a0a0"/>
<rect x="12" y="155" width="1" height="1" fill="#a0a0a0"/>
<rect x="12" y="157" width="1" height="1" fill="#a0a0a0"/>
<rect x="12" y="159" width="1" height="1" fill="#a0a0a0"/>
<rect x="12" y="161" width="1" height="1" fill="#a0a0a0"/>
<rect x="12" y="163" width="1" height="1" fill="#a0a0a0"/>
<rect x="12" y="165" width="1" height="1" fill="#a0a0a0"/>
<rect x="12" y="167" width="1" height="1" fill="#a0a0a0"/>
<rect x="12" y="169" width="1" height="1" fill="#a0a0a0"/>
<rect x="12" y="171" width="1" height="1" fill="#a0a0a0"/>
<rect x="12" y="173" width="1" height="1" fill="#a0a0a0"/>
<rect x="12" y="175" width="1" height="1" fill="#a0a0a0"/>
<rect x="12" y="177" width="1" height="1" fill="#a0a0a0"/>
<rect x="12" y="179" width="1" height="1" fill="#a0a0a0"/>
<rect x="12" y="181" width="1" height="1" fill="#a0a0a0"/>
<rect x="12" y="183" width="1" height="1" fill="#a0a0a0"/>
<rect x="12" y="185" width="1" height="1" fill="#a0a0a0"/>
<rect x="12" y="187" width="1" height="1" fill="#a0a0a0"/>
<rect x="12" y="189" width="1" height="1" fill="#a0a0a0"/>
<rect x="12" y="191" width="1" height="1" fill="#a0a0a0"/>
<rect x="12" y="193" width="1" height="1" fill="#a0a0a0"/>
<rect x="12" y="195" width="1" height="1" fill="#a0a0a0"/>
<rect x="12" y="197" width="1" height="1" fill="#a0a0a0"/>
<rect x="12" y="199" width="1" height="1" fill="#a0a0a0"/>
<rect x="12" y="201" width="1" height="1" fill="#a0a0a0"/>
<rect x="12" y="203" width="1" height="1" fill="#a0a0a0"/>
<rect x="12" y="205" width="1" height="1" fill="#a0a0a0"/>
<rect x="12" y="207" width="1" height="1" fill="#a0a0a0"/>
<rect x="12" y="209" width="1" height="1" fill="#a0a0a0"/>
<rect x="12" y="211" width="1" height="1" fill="#a0a0a0"/>
<rect x="12" y="213" width="1" height="1" fill="#a0a0a0"/>
<rect x="12" y="215" width="1" height="1" fill="#a0a0a0"/>
<rect x="12" y="217" width="1" height="1" fill="#a0a0a0"/>
<rect x="12" y="219" width="1" height="1" fill="#a0a0a0"/>
<rect x="12" y="221" width="1" height="1" fill="#a0a0a0"/>
<rect x="12" y="223" width="1" height="1" fill="#a0a0a0"/>
<rect x="12" y="225" width="1" height="1" fill="#a0a0a0"/>
<rect x="12" y="227" width="1" height="1" fill="#a0a0a0"/>
<rect x="12" y="229" width="1" height="1" fill="#a0a0a0"/>
<rect x="12" y="231" width="1" height="1" fill="#a0a0a0"/>
<rect x="12" y="233" width="1" height="1" fill="#a0a0a0"/>
<rect x="12" y="235" width="1" height="1" fill="#a0a0a0"/>
<rect x="12" y="237" width="1" height="1" fill="#a0a0a0"/>
<rect x="12" y="239" width="1" height="1" fill="#a0a0a0"/>
<rect x="12" y="241" width="1" height="1" fill="#a0a0a0"/>
<rect x="12" y="243" width="1" height="1" fill="#a0a0a0"/>
<rect x="12" y="245" width="1" height="1" fill="#a0a0a0"/>
<rect x="12" y="247" width="1" height="1" fill="#a0a0a0"/>
<rect x="12" y="249" width="1" height="1" fill="#a0a0a0"/>
<rect x="12" y="251" width="1" height="1" fill="#a0a0a0"/>
<rect x="12" y="253" width="1" height="1" fill="#a0a0a0"/>
<rect x="12" y="255" width="1" height="1" fill="#a0a0a0"/>
<rect x="12" y="257" width="1" height="1" fill="#a0a0a0"/>
<rect x="12" y="259" width="1" height="1" fill="#a0a0a0"/>
<rect x="12" y="261" width="1" height="1" fill="#a0a0a0"/>
<rect x="12" y="263" width="1" height="1" fill="#a0a0a0"/>
<rect x="12" y="265" width="1" height="1" fill="#a0a0a0"/>
<rect x="12" y="267" width="1" height="1" fill="#a0a0a0"/>
<rect x="12" y="269" width="1" height="1" fill="#a0a0a0"/>
<rect x="12" y="271" width="1" height="1" fill="#a0a0a0"/>
<rect x="12" y="273" width="1" height="1" fill="#a0a0a0"/>
<rect x="12" y="275" width="1" height="1" fill="#a0a0a0"/>
<rect x="12" y="277" width="1" height="1" fill="#a0a0a0"/>
<rect x="12" y="279" width="1" height="1" fill="#a0a0a0"/>
<rect x="12" y="281" width="1" height="1" fill="#a0a0a0"/>
<rect x="12" y="283" width="1" height="1" fill="#a0a0a0"/>
<rect x="12" y="285" width="1" height="1" fill="#a0a0a0"/>
<rect x="12" y="287" width="1" height="1" fill="#a0a0a0"/>
<rect x="12" y="289" width="1" height="1" fill="#a0a0a0"/>
<rect x="12" y="291" width="1" height="1" fill="#a0a0a0"/>
<rect x="12" y="293" width="1" height="1" fill="#a0a0a0"/>
<rect x="12" y="295" width="1" height="1" fill="#a0a0a0"/>
<rect x="12" y="297" width="1" height="1" fill="#a0a0a0"/>
<rect x="18" y="117" width="1" height="1" fill="#a0a0a0"/>
<rect x="20" y="117" width="1" height="1" fill="#a0a0a0"/>
<rect x="22" y="117" width="1" height="1" fill="#a0a0a0"/>
<rect x="8.5" y="113.5" width="8" height="8" rx="1.5" fill="#f8f8f8" stroke="#8a8a8a" shape-rendering="auto"/>
<rect x="10" y="117" width="5" height="1" fill="#2c4a9a"/><rect x="12" y="115" width="1" height="5" fill="#2c4a9a"/>
<rect x="29" y="114" width="8" height="8" fill="#c4c4c4"/><rect x="31" y="116" width="4" height="4" fill="#fff"/>
<rect x="18" y="135" width="1" height="1" fill="#a0a0a0"/>
<rect x="20" y="135" width="1" height="1" fill="#a0a0a0"/>
<rect x="22" y="135" width="1" height="1" fill="#a0a0a0"/>
<rect x="8.5" y="131.5" width="8" height="8" rx="1.5" fill="#f8f8f8" stroke="#8a8a8a" shape-rendering="auto"/>
<rect x="10" y="135" width="5" height="1" fill="#2c4a9a"/><rect x="12" y="133" width="1" height="5" fill="#2c4a9a"/>
<rect x="29" y="132" width="8" height="8" fill="#c4c4c4"/><rect x="31" y="134" width="4" height="4" fill="#fff"/>
<path d="M28.6 133.8 L30.8 132.6 L32.8 135.2 L37.9 127.4 L38.9 128 L34.2 138.2 L32.2 138.4 Z" fill="#008000" shape-rendering="auto"/><rect x="38" y="127" width="1" height="1" fill="#a08000"/>
<rect x="14" y="153" width="1" height="1" fill="#a0a0a0"/>
<rect x="16" y="153" width="1" height="1" fill="#a0a0a0"/>
<rect x="18" y="153" width="1" height="1" fill="#a0a0a0"/>
<rect x="20" y="153" width="1" height="1" fill="#a0a0a0"/>
<rect x="22" y="153" width="1" height="1" fill="#a0a0a0"/>
<rect x="29" y="150" width="8" height="8" fill="#c4c4c4"/><rect x="31" y="152" width="4" height="4" fill="#fff"/>
<path d="M28.6 151.8 L30.8 150.6 L32.8 153.2 L37.9 145.4 L38.9 146 L34.2 156.2 L32.2 156.4 Z" fill="#008000" shape-rendering="auto"/><rect x="38" y="145" width="1" height="1" fill="#a08000"/>
<rect x="14" y="171" width="1" height="1" fill="#a0a0a0"/>
<rect x="16" y="171" width="1" height="1" fill="#a0a0a0"/>
<rect x="18" y="171" width="1" height="1" fill="#a0a0a0"/>
<rect x="20" y="171" width="1" height="1" fill="#a0a0a0"/>
<rect x="22" y="171" width="1" height="1" fill="#a0a0a0"/>
<rect x="29" y="168" width="8" height="8" fill="#c4c4c4"/><rect x="31" y="170" width="4" height="4" fill="#fff"/>
<path d="M28.6 169.8 L30.8 168.6 L32.8 171.2 L37.9 163.4 L38.9 164 L34.2 174.2 L32.2 174.4 Z" fill="#008000" shape-rendering="auto"/><rect x="38" y="163" width="1" height="1" fill="#a08000"/>
<rect x="18" y="189" width="1" height="1" fill="#a0a0a0"/>
<rect x="20" y="189" width="1" height="1" fill="#a0a0a0"/>
<rect x="22" y="189" width="1" height="1" fill="#a0a0a0"/>
<rect x="8.5" y="185.5" width="8" height="8" rx="1.5" fill="#f8f8f8" stroke="#8a8a8a" shape-rendering="auto"/>
<rect x="10" y="189" width="5" height="1" fill="#2c4a9a"/><rect x="12" y="187" width="1" height="5" fill="#2c4a9a"/>
<rect x="29" y="186" width="8" height="8" fill="#c4c4c4"/><rect x="31" y="188" width="4" height="4" fill="#fff"/>
<rect x="29" y="186" width="8" height="8" fill="#d8d8d8"/>
<path d="M29.5 186.5 L36.5 193.5 M36.5 186.5 L29.5 193.5" stroke="#ff0000" stroke-width="1.6" shape-rendering="auto"/>
<rect x="18" y="207" width="1" height="1" fill="#a0a0a0"/>
<rect x="20" y="207" width="1" height="1" fill="#a0a0a0"/>
<rect x="22" y="207" width="1" height="1" fill="#a0a0a0"/>
<rect x="8.5" y="203.5" width="8" height="8" rx="1.5" fill="#f8f8f8" stroke="#8a8a8a" shape-rendering="auto"/>
<rect x="10" y="207" width="5" height="1" fill="#2c4a9a"/><rect x="12" y="205" width="1" height="5" fill="#2c4a9a"/>
<rect x="29" y="204" width="8" height="8" fill="#c4c4c4"/><rect x="31" y="206" width="4" height="4" fill="#fff"/>
<rect x="18" y="225" width="1" height="1" fill="#a0a0a0"/>
<rect x="20" y="225" width="1" height="1" fill="#a0a0a0"/>
<rect x="22" y="225" width="1" height="1" fill="#a0a0a0"/>
<rect x="8.5" y="221.5" width="8" height="8" rx="1.5" fill="#f8f8f8" stroke="#8a8a8a" shape-rendering="auto"/>
<rect x="10" y="225" width="5" height="1" fill="#2c4a9a"/><rect x="12" y="223" width="1" height="5" fill="#2c4a9a"/>
<rect x="29" y="222" width="8" height="8" fill="#c4c4c4"/><rect x="31" y="224" width="4" height="4" fill="#fff"/>
<rect x="18" y="243" width="1" height="1" fill="#a0a0a0"/>
<rect x="20" y="243" width="1" height="1" fill="#a0a0a0"/>
<rect x="22" y="243" width="1" height="1" fill="#a0a0a0"/>
<rect x="8.5" y="239.5" width="8" height="8" rx="1.5" fill="#f8f8f8" stroke="#8a8a8a" shape-rendering="auto"/>
<rect x="10" y="243" width="5" height="1" fill="#2c4a9a"/><rect x="12" y="241" width="1" height="5" fill="#2c4a9a"/>
<rect x="29" y="240" width="8" height="8" fill="#c4c4c4"/><rect x="31" y="242" width="4" height="4" fill="#fff"/>
<rect x="18" y="261" width="1" height="1" fill="#a0a0a0"/>
<rect x="20" y="261" width="1" height="1" fill="#a0a0a0"/>
<rect x="22" y="261" width="1" height="1" fill="#a0a0a0"/>
<rect x="8.5" y="257.5" width="8" height="8" rx="1.5" fill="#f8f8f8" stroke="#8a8a8a" shape-rendering="auto"/>
<rect x="10" y="261" width="5" height="1" fill="#2c4a9a"/><rect x="12" y="259" width="1" height="5" fill="#2c4a9a"/>
<rect x="29" y="258" width="8" height="8" fill="#c4c4c4"/><rect x="31" y="260" width="4" height="4" fill="#fff"/>
<rect x="18" y="279" width="1" height="1" fill="#a0a0a0"/>
<rect x="20" y="279" width="1" height="1" fill="#a0a0a0"/>
<rect x="22" y="279" width="1" height="1" fill="#a0a0a0"/>
<rect x="8.5" y="275.5" width="8" height="8" rx="1.5" fill="#f8f8f8" stroke="#8a8a8a" shape-rendering="auto"/>
<rect x="10" y="279" width="5" height="1" fill="#2c4a9a"/><rect x="12" y="277" width="1" height="5" fill="#2c4a9a"/>
<rect x="29" y="276" width="8" height="8" fill="#c4c4c4"/><rect x="31" y="278" width="4" height="4" fill="#fff"/>
<rect x="14" y="297" width="1" height="1" fill="#a0a0a0"/>
<rect x="16" y="297" width="1" height="1" fill="#a0a0a0"/>
<rect x="18" y="297" width="1" height="1" fill="#a0a0a0"/>
<rect x="20" y="297" width="1" height="1" fill="#a0a0a0"/>
<rect x="22" y="297" width="1" height="1" fill="#a0a0a0"/>
<rect x="29" y="294" width="8" height="8" fill="#c4c4c4"/><rect x="31" y="296" width="4" height="4" fill="#fff"/>
</svg>
<div class="t " style="left:30.3px;top:91.64px;font-size:13.3px;line-height:13.3px;color:#000">MIKE SHE Flow Model Description</div>
<div class="b" style="left:43px;top:161px;width:81px;height:18px;background:#0078d7;outline:1px dotted #ff9a00;outline-offset:-1px"></div>
<div class="t " style="left:46.5px;top:109.96px;font-size:13.4px;line-height:13.4px;color:#000">Display</div>
<div class="t " style="left:46.5px;top:127.96px;font-size:13.4px;line-height:13.4px;color:#000">Simulation specification</div>
<div class="t " style="left:46.5px;top:145.96px;font-size:13.4px;line-height:13.4px;color:#000">Model Domain and Grid</div>
<div class="t " style="left:46.5px;top:163.96px;font-size:13.4px;line-height:13.4px;color:#fff">Topography</div>
<div class="t " style="left:46.5px;top:181.96px;font-size:13.4px;line-height:13.4px;color:#000">Climate</div>
<div class="t " style="left:46.5px;top:199.96px;font-size:13.4px;line-height:13.4px;color:#000">Land Use</div>
<div class="t " style="left:46.5px;top:217.96px;font-size:13.4px;line-height:13.4px;color:#000">Overland Flow</div>
<div class="t " style="left:46.5px;top:235.96px;font-size:13.4px;line-height:13.4px;color:#000">Unsaturated Flow</div>
<div class="t " style="left:46.5px;top:253.96px;font-size:13.4px;line-height:13.4px;color:#000">Saturated Zone</div>
<div class="t " style="left:46.5px;top:271.96px;font-size:13.4px;line-height:13.4px;color:#000">Storing of results</div>
<div class="t " style="left:46.5px;top:289.96px;font-size:13.4px;line-height:13.4px;color:#000">Extra Parameters</div>
<div class="b" style="left:249px;top:85px;width:1px;height:778px;background:#ffffff;"></div>
<div class="b" style="left:253px;top:85px;width:1px;height:774px;background:#a0a0a0;"></div>
<div class="b" style="left:254px;top:85px;width:1px;height:774px;background:#696969;"></div>
<div class="b" style="left:255px;top:85px;width:1176px;height:1px;background:#ffffff;"></div>
<div class="b" style="left:255px;top:85px;width:1px;height:774px;background:#ffffff;"></div>
<div class="b" style="left:253px;top:859px;width:1178px;height:1px;background:#ffffff;"></div>
<div class="b" style="left:268px;top:98px;width:1163px;height:34px;background:#f8f8f0;"></div>
<div class="b" style="left:269px;top:99px;width:1162px;height:32px;background:linear-gradient(90deg,#6462c0 0%,#807cbc 37%,#8c8dbd 63%,#a9a9bf 100%)"></div>
<div class="t " style="left:279.2px;top:107.27px;font-size:20px;line-height:20px;color:#000">Topography</div>
<div class="t " style="left:271.7px;top:138.51px;font-size:13.1px;line-height:13.1px;color:#000">Spatial Distribution:</div>
<div class="b" style="left:271px;top:153px;width:200px;height:24px;background:#fdfdfd;border:1px solid #d5d5d5;border-bottom-color:#b8b8b8;border-radius:2px;box-sizing:border-box"></div>
<div class="t " style="left:275.6px;top:159.15px;font-size:12.7px;line-height:12.7px;color:#000">Grid file (.dfs2)</div>
<svg class="b" style="left:455px;top:161px" width="12" height="8" viewBox="0 0 12 8"><path d="M1 1.5 L5.5 6 L10 1.5" fill="none" stroke="#505050" stroke-width="1"/></svg>
<div class="t " style="left:271.6px;top:186.43px;font-size:13.2px;line-height:13.2px;color:#000">Filename:</div>
<div class="b" style="left:270px;top:201px;width:330px;height:24px;background:#ffffff;border:1px solid #e5e5e5;border-bottom:1px solid #8a8a8a;border-radius:2px;box-sizing:border-box;overflow:hidden"><div class="t" style="right:2px;top:4px;font-size:13.4px;line-height:13.4px;color:#000;white-space:pre">ıts\MIKEshe_Klaserie\Inputs\DEM\upperklas_dem.dfs2</div></div>
<div class="b" style="left:603px;top:202px;width:23px;height:22px;background:#fdfdfd;border:1px solid #d0d0d0;border-bottom-color:#b8b8b8;border-radius:4px;box-sizing:border-box"></div>
<svg class="b" style="left:603px;top:202px" width="23" height="22"><rect x="6" y="15" width="2" height="2" fill="#000"/><rect x="10" y="15" width="2" height="2" fill="#000"/><rect x="14" y="15" width="2" height="2" fill="#000"/></svg>
<div class="t " style="left:637.2px;top:186.65px;font-size:12.7px;line-height:12.7px;color:#000">Attribute:</div>
<div class="b" style="left:637px;top:202px;width:125px;height:22px;background:#efefef;border:1px solid #e0e0e0;box-sizing:border-box"></div>
<div class="t " style="left:640.8px;top:205.40px;font-size:13.0px;line-height:13.0px;color:#6d6d6d">Grid Data</div>
<div class="b" style="left:770px;top:198px;width:56px;height:26px;background:#fdfdfd;border:1px solid #d0d0d0;border-bottom-color:#b8b8b8;border-radius:4px;box-sizing:border-box"></div>
<div class="t " style="left:782.6px;top:206.17px;font-size:12.2px;line-height:12.2px;color:#000">Edit...</div>
<div class="b" style="left:836px;top:198px;width:68px;height:26px;background:#fdfdfd;border:1px solid #d0d0d0;border-bottom-color:#b8b8b8;border-radius:4px;box-sizing:border-box"></div>
<div class="t " style="left:845.3px;top:205.92px;font-size:12.5px;line-height:12.5px;color:#000">Create...</div>
<svg class="b" style="left:715px;top:237px" width="16" height="16" viewBox="0 0 16 16"><rect x="0" y="0" width="16" height="16" rx="3" fill="#005fb8"/><path d="M4 8.2 L6.8 11 L12 5.2" fill="none" stroke="#fff" stroke-width="1.2"/></svg>
<div class="t " style="left:734.5px;top:238.13px;font-size:13.2px;line-height:13.2px;color:#000">Show grid data</div>
<div class="b" style="left:269px;top:257px;width:1162px;height:2px;background:#a0a0a0;"></div>
<div class="b" style="left:269px;top:257px;width:2px;height:584px;background:#a0a0a0;"></div>
<div class="b" style="left:271px;top:259px;width:1160px;height:1px;background:#696969;"></div>
<div class="b" style="left:271px;top:259px;width:1px;height:582px;background:#696969;"></div>
<div class="b" style="left:272px;top:260px;width:1159px;height:581px;background:#ffffff;"></div>
<div class="b" style="left:271px;top:841px;width:1160px;height:1px;background:#e3e3e3;"></div>
<div class="b" style="left:269px;top:842px;width:1162px;height:2px;background:#ffffff;"></div>
<div class="t " style="left:297.3px;top:265.95px;font-size:14px;line-height:14px;color:#000">[meter]</div>
<svg class="b" style="left:0;top:0" width="1431" height="910" shape-rendering="crispEdges"><line x1="431.5" y1="290" x2="431.5" y2="792" stroke="#0a84ff" stroke-width="1" stroke-dasharray="3 3"/>
<line x1="534.5" y1="290" x2="534.5" y2="792" stroke="#0a84ff" stroke-width="1" stroke-dasharray="3 3"/>
<line x1="636.5" y1="290" x2="636.5" y2="792" stroke="#0a84ff" stroke-width="1" stroke-dasharray="3 3"/>
<line x1="739.5" y1="290" x2="739.5" y2="792" stroke="#0a84ff" stroke-width="1" stroke-dasharray="3 3"/>
<line x1="841.5" y1="290" x2="841.5" y2="792" stroke="#0a84ff" stroke-width="1" stroke-dasharray="3 3"/>
<line x1="369" y1="306.5" x2="871" y2="306.5" stroke="#0a84ff" stroke-width="1" stroke-dasharray="3 3"/>
<line x1="369" y1="358.5" x2="871" y2="358.5" stroke="#0a84ff" stroke-width="1" stroke-dasharray="3 3"/>
<line x1="369" y1="409.5" x2="871" y2="409.5" stroke="#0a84ff" stroke-width="1" stroke-dasharray="3 3"/>
<line x1="369" y1="460.5" x2="871" y2="460.5" stroke="#0a84ff" stroke-width="1" stroke-dasharray="3 3"/>
<line x1="369" y1="511.5" x2="871" y2="511.5" stroke="#0a84ff" stroke-width="1" stroke-dasharray="3 3"/>
<line x1="369" y1="562.5" x2="871" y2="562.5" stroke="#0a84ff" stroke-width="1" stroke-dasharray="3 3"/>
<line x1="369" y1="614.5" x2="871" y2="614.5" stroke="#0a84ff" stroke-width="1" stroke-dasharray="3 3"/>
<line x1="369" y1="665.5" x2="871" y2="665.5" stroke="#0a84ff" stroke-width="1" stroke-dasharray="3 3"/>
<line x1="369" y1="716.5" x2="871" y2="716.5" stroke="#0a84ff" stroke-width="1" stroke-dasharray="3 3"/>
<line x1="369" y1="767.5" x2="871" y2="767.5" stroke="#0a84ff" stroke-width="1" stroke-dasharray="3 3"/>
<rect x="369.5" y="290.5" width="502" height="502" fill="none" stroke="#000" stroke-width="1"/>
<line x1="370.5" y1="793" x2="370.5" y2="797" stroke="#000"/>
<line x1="380.5" y1="793" x2="380.5" y2="797" stroke="#000"/>
<line x1="390.5" y1="793" x2="390.5" y2="797" stroke="#000"/>
<line x1="401.5" y1="793" x2="401.5" y2="797" stroke="#000"/>
<line x1="411.5" y1="793" x2="411.5" y2="797" stroke="#000"/>
<line x1="421.5" y1="793" x2="421.5" y2="797" stroke="#000"/>
<line x1="431.5" y1="793" x2="431.5" y2="799" stroke="#000"/>
<line x1="442.5" y1="793" x2="442.5" y2="797" stroke="#000"/>
<line x1="452.5" y1="793" x2="452.5" y2="797" stroke="#000"/>
<line x1="462.5" y1="793" x2="462.5" y2="797" stroke="#000"/>
<line x1="472.5" y1="793" x2="472.5" y2="797" stroke="#000"/>
<line x1="483.5" y1="793" x2="483.5" y2="797" stroke="#000"/>
<line x1="493.5" y1="793" x2="493.5" y2="797" stroke="#000"/>
<line x1="503.5" y1="793" x2="503.5" y2="797" stroke="#000"/>
<line x1="513.5" y1="793" x2="513.5" y2="797" stroke="#000"/>
<line x1="524.5" y1="793" x2="524.5" y2="797" stroke="#000"/>
<line x1="534.5" y1="793" x2="534.5" y2="799" stroke="#000"/>
<line x1="544.5" y1="793" x2="544.5" y2="797" stroke="#000"/>
<line x1="554.5" y1="793" x2="554.5" y2="797" stroke="#000"/>
<line x1="565.5" y1="793" x2="565.5" y2="797" stroke="#000"/>
<line x1="575.5" y1="793" x2="575.5" y2="797" stroke="#000"/>
<line x1="585.5" y1="793" x2="585.5" y2="797" stroke="#000"/>
<line x1="595.5" y1="793" x2="595.5" y2="797" stroke="#000"/>
<line x1="606.5" y1="793" x2="606.5" y2="797" stroke="#000"/>
<line x1="616.5" y1="793" x2="616.5" y2="797" stroke="#000"/>
<line x1="626.5" y1="793" x2="626.5" y2="797" stroke="#000"/>
<line x1="636.5" y1="793" x2="636.5" y2="799" stroke="#000"/>
<line x1="647.5" y1="793" x2="647.5" y2="797" stroke="#000"/>
<line x1="657.5" y1="793" x2="657.5" y2="797" stroke="#000"/>
<line x1="667.5" y1="793" x2="667.5" y2="797" stroke="#000"/>
<line x1="677.5" y1="793" x2="677.5" y2="797" stroke="#000"/>
<line x1="688.5" y1="793" x2="688.5" y2="797" stroke="#000"/>
<line x1="698.5" y1="793" x2="698.5" y2="797" stroke="#000"/>
<line x1="708.5" y1="793" x2="708.5" y2="797" stroke="#000"/>
<line x1="718.5" y1="793" x2="718.5" y2="797" stroke="#000"/>
<line x1="729.5" y1="793" x2="729.5" y2="797" stroke="#000"/>
<line x1="739.5" y1="793" x2="739.5" y2="799" stroke="#000"/>
<line x1="749.5" y1="793" x2="749.5" y2="797" stroke="#000"/>
<line x1="759.5" y1="793" x2="759.5" y2="797" stroke="#000"/>
<line x1="770.5" y1="793" x2="770.5" y2="797" stroke="#000"/>
<line x1="780.5" y1="793" x2="780.5" y2="797" stroke="#000"/>
<line x1="790.5" y1="793" x2="790.5" y2="797" stroke="#000"/>
<line x1="800.5" y1="793" x2="800.5" y2="797" stroke="#000"/>
<line x1="811.5" y1="793" x2="811.5" y2="797" stroke="#000"/>
<line x1="821.5" y1="793" x2="821.5" y2="797" stroke="#000"/>
<line x1="831.5" y1="793" x2="831.5" y2="797" stroke="#000"/>
<line x1="841.5" y1="793" x2="841.5" y2="799" stroke="#000"/>
<line x1="852.5" y1="793" x2="852.5" y2="797" stroke="#000"/>
<line x1="862.5" y1="793" x2="862.5" y2="797" stroke="#000"/>
<line x1="365" y1="788.5" x2="369" y2="788.5" stroke="#000"/>
<line x1="365" y1="778.5" x2="369" y2="778.5" stroke="#000"/>
<line x1="363" y1="767.5" x2="369" y2="767.5" stroke="#000"/>
<line x1="365" y1="757.5" x2="369" y2="757.5" stroke="#000"/>
<line x1="365" y1="747.5" x2="369" y2="747.5" stroke="#000"/>
<line x1="365" y1="737.5" x2="369" y2="737.5" stroke="#000"/>
<line x1="365" y1="726.5" x2="369" y2="726.5" stroke="#000"/>
<line x1="363" y1="716.5" x2="369" y2="716.5" stroke="#000"/>
<line x1="365" y1="706.5" x2="369" y2="706.5" stroke="#000"/>
<line x1="365" y1="696.5" x2="369" y2="696.5" stroke="#000"/>
<line x1="365" y1="685.5" x2="369" y2="685.5" stroke="#000"/>
<line x1="365" y1="675.5" x2="369" y2="675.5" stroke="#000"/>
<line x1="363" y1="665.5" x2="369" y2="665.5" stroke="#000"/>
<line x1="365" y1="655.5" x2="369" y2="655.5" stroke="#000"/>
<line x1="365" y1="644.5" x2="369" y2="644.5" stroke="#000"/>
<line x1="365" y1="634.5" x2="369" y2="634.5" stroke="#000"/>
<line x1="365" y1="624.5" x2="369" y2="624.5" stroke="#000"/>
<line x1="363" y1="614.5" x2="369" y2="614.5" stroke="#000"/>
<line x1="365" y1="603.5" x2="369" y2="603.5" stroke="#000"/>
<line x1="365" y1="593.5" x2="369" y2="593.5" stroke="#000"/>
<line x1="365" y1="583.5" x2="369" y2="583.5" stroke="#000"/>
<line x1="365" y1="573.5" x2="369" y2="573.5" stroke="#000"/>
<line x1="363" y1="562.5" x2="369" y2="562.5" stroke="#000"/>
<line x1="365" y1="552.5" x2="369" y2="552.5" stroke="#000"/>
<line x1="365" y1="542.5" x2="369" y2="542.5" stroke="#000"/>
<line x1="365" y1="532.5" x2="369" y2="532.5" stroke="#000"/>
<line x1="365" y1="522.5" x2="369" y2="522.5" stroke="#000"/>
<line x1="363" y1="511.5" x2="369" y2="511.5" stroke="#000"/>
<line x1="365" y1="501.5" x2="369" y2="501.5" stroke="#000"/>
<line x1="365" y1="491.5" x2="369" y2="491.5" stroke="#000"/>
<line x1="365" y1="481.5" x2="369" y2="481.5" stroke="#000"/>
<line x1="365" y1="470.5" x2="369" y2="470.5" stroke="#000"/>
<line x1="363" y1="460.5" x2="369" y2="460.5" stroke="#000"/>
<line x1="365" y1="450.5" x2="369" y2="450.5" stroke="#000"/>
<line x1="365" y1="440.5" x2="369" y2="440.5" stroke="#000"/>
<line x1="365" y1="429.5" x2="369" y2="429.5" stroke="#000"/>
<line x1="365" y1="419.5" x2="369" y2="419.5" stroke="#000"/>
<line x1="363" y1="409.5" x2="369" y2="409.5" stroke="#000"/>
<line x1="365" y1="399.5" x2="369" y2="399.5" stroke="#000"/>
<line x1="365" y1="388.5" x2="369" y2="388.5" stroke="#000"/>
<line x1="365" y1="378.5" x2="369" y2="378.5" stroke="#000"/>
<line x1="365" y1="368.5" x2="369" y2="368.5" stroke="#000"/>
<line x1="363" y1="358.5" x2="369" y2="358.5" stroke="#000"/>
<line x1="365" y1="347.5" x2="369" y2="347.5" stroke="#000"/>
<line x1="365" y1="337.5" x2="369" y2="337.5" stroke="#000"/>
<line x1="365" y1="327.5" x2="369" y2="327.5" stroke="#000"/>
<line x1="365" y1="317.5" x2="369" y2="317.5" stroke="#000"/>
<line x1="363" y1="306.5" x2="369" y2="306.5" stroke="#000"/>
<line x1="365" y1="296.5" x2="369" y2="296.5" stroke="#000"/></svg>
<div class="t " style="right:1073.4px;top:300.68px;font-size:14.2px;line-height:14.2px;color:#000">7284000</div>
<div class="t " style="right:1073.4px;top:351.90px;font-size:14.2px;line-height:14.2px;color:#000">7283000</div>
<div class="t " style="right:1073.4px;top:403.12px;font-size:14.2px;line-height:14.2px;color:#000">7282000</div>
<div class="t " style="right:1073.4px;top:454.34px;font-size:14.2px;line-height:14.2px;color:#000">7281000</div>
<div class="t " style="right:1073.4px;top:505.56px;font-size:14.2px;line-height:14.2px;color:#000">7280000</div>
<div class="t " style="right:1073.4px;top:556.78px;font-size:14.2px;line-height:14.2px;color:#000">7279000</div>
<div class="t " style="right:1073.4px;top:608.00px;font-size:14.2px;line-height:14.2px;color:#000">7278000</div>
<div class="t " style="right:1073.4px;top:659.22px;font-size:14.2px;line-height:14.2px;color:#000">7277000</div>
<div class="t " style="right:1073.4px;top:710.44px;font-size:14.2px;line-height:14.2px;color:#000">7276000</div>
<div class="t " style="right:1073.4px;top:761.66px;font-size:14.2px;line-height:14.2px;color:#000">7275000</div>
<div class="t" style="left:381.40px;width:100px;text-align:center;top:803.98px;font-size:14.2px;line-height:14.2px;color:#000">284000</div>
<div class="t" style="left:483.90px;width:100px;text-align:center;top:803.98px;font-size:14.2px;line-height:14.2px;color:#000">286000</div>
<div class="t" style="left:586.40px;width:100px;text-align:center;top:803.98px;font-size:14.2px;line-height:14.2px;color:#000">288000</div>
<div class="t" style="left:688.90px;width:100px;text-align:center;top:803.98px;font-size:14.2px;line-height:14.2px;color:#000">290000</div>
<div class="t" style="left:791.40px;width:100px;text-align:center;top:803.98px;font-size:14.2px;line-height:14.2px;color:#000">292000</div>
<div class="t " style="right:560px;top:821.15px;font-size:14px;line-height:14px;color:#000">[meter]</div>
<div class="t " style="left:911.5px;top:503.95px;font-size:14px;line-height:14px;color:#000">[meter]</div>
<div class="b" style="left:911px;top:523px;width:29px;height:15px;background:#ff0000;border:1px solid #000;box-sizing:border-box"></div>
<div class="t " style="left:947px;top:523.88px;font-size:14.2px;line-height:14.2px;color:#000">Above 1840</div>
<div class="b" style="left:911px;top:539px;width:29px;height:15px;background:#ff5500;border:1px solid #000;box-sizing:border-box"></div>
<div class="t " style="left:947px;top:539.88px;font-size:14.2px;line-height:14.2px;color:#000">1760 - 1840</div>
<div class="b" style="left:911px;top:555px;width:29px;height:15px;background:#ffaa00;border:1px solid #000;box-sizing:border-box"></div>
<div class="t " style="left:947px;top:555.88px;font-size:14.2px;line-height:14.2px;color:#000">1680 - 1760</div>
<div class="b" style="left:911px;top:571px;width:29px;height:15px;background:#ffff00;border:1px solid #000;box-sizing:border-box"></div>
<div class="t " style="left:947px;top:571.88px;font-size:14.2px;line-height:14.2px;color:#000">1600 - 1680</div>
<div class="b" style="left:911px;top:587px;width:29px;height:15px;background:#aaff00;border:1px solid #000;box-sizing:border-box"></div>
<div class="t " style="left:947px;top:587.88px;font-size:14.2px;line-height:14.2px;color:#000">1520 - 1600</div>
<div class="b" style="left:911px;top:603px;width:29px;height:15px;background:#55ff00;border:1px solid #000;box-sizing:border-box"></div>
<div class="t " style="left:947px;top:603.88px;font-size:14.2px;line-height:14.2px;color:#000">1440 - 1520</div>
<div class="b" style="left:911px;top:619px;width:29px;height:15px;background:#00ff00;border:1px solid #000;box-sizing:border-box"></div>
<div class="t " style="left:947px;top:619.88px;font-size:14.2px;line-height:14.2px;color:#000">1360 - 1440</div>
<div class="b" style="left:911px;top:635px;width:29px;height:15px;background:#00e040;border:1px solid #000;box-sizing:border-box"></div>
<div class="t " style="left:947px;top:635.88px;font-size:14.2px;line-height:14.2px;color:#000">1280 - 1360</div>
<div class="b" style="left:911px;top:651px;width:29px;height:15px;background:#00c870;border:1px solid #000;box-sizing:border-box"></div>
<div class="t " style="left:947px;top:651.88px;font-size:14.2px;line-height:14.2px;color:#000">1200 - 1280</div>
<div class="b" style="left:911px;top:667px;width:29px;height:15px;background:#00a0a0;border:1px solid #000;box-sizing:border-box"></div>
<div class="t " style="left:947px;top:667.88px;font-size:14.2px;line-height:14.2px;color:#000">1120 - 1200</div>
<div class="b" style="left:911px;top:683px;width:29px;height:15px;background:#0068c8;border:1px solid #000;box-sizing:border-box"></div>
<div class="t " style="left:947px;top:683.88px;font-size:14.2px;line-height:14.2px;color:#000">1040 - 1120</div>
<div class="b" style="left:911px;top:699px;width:29px;height:15px;background:#0040e0;border:1px solid #000;box-sizing:border-box"></div>
<div class="t " style="right:408px;top:699.88px;font-size:14.2px;line-height:14.2px;color:#000">960 - 1040</div>
<div class="b" style="left:911px;top:715px;width:29px;height:15px;background:#0000ff;border:1px solid #000;box-sizing:border-box"></div>
<div class="t " style="right:408px;top:715.88px;font-size:14.2px;line-height:14.2px;color:#000">880 -   960</div>
<div class="b" style="left:911px;top:731px;width:29px;height:15px;background:#2a00d5;border:1px solid #000;box-sizing:border-box"></div>
<div class="t " style="right:408px;top:731.88px;font-size:14.2px;line-height:14.2px;color:#000">800 -   880</div>
<div class="b" style="left:911px;top:747px;width:29px;height:15px;background:#5500aa;border:1px solid #000;box-sizing:border-box"></div>
<div class="t " style="right:408px;top:747.88px;font-size:14.2px;line-height:14.2px;color:#000">720 -   800</div>
<div class="b" style="left:911px;top:763px;width:29px;height:15px;background:#800080;border:1px solid #000;box-sizing:border-box"></div>
<div class="t " style="left:947px;top:763.88px;font-size:14.2px;line-height:14.2px;color:#000">Below</div>
<div class="t " style="right:408px;top:763.88px;font-size:14.2px;line-height:14.2px;color:#000">720</div>
<div class="b" style="left:911px;top:779px;width:29px;height:15px;background:#ffffff;border:1px solid #000;box-sizing:border-box"></div>
<div class="t " style="left:947px;top:779.88px;font-size:14.2px;line-height:14.2px;color:#000">Undefined Value</div>
<div class="t " style="left:5px;top:871.07px;font-size:14.8px;line-height:14.8px;color:#000">Shape file: File is not valid</div>
</body></html>
